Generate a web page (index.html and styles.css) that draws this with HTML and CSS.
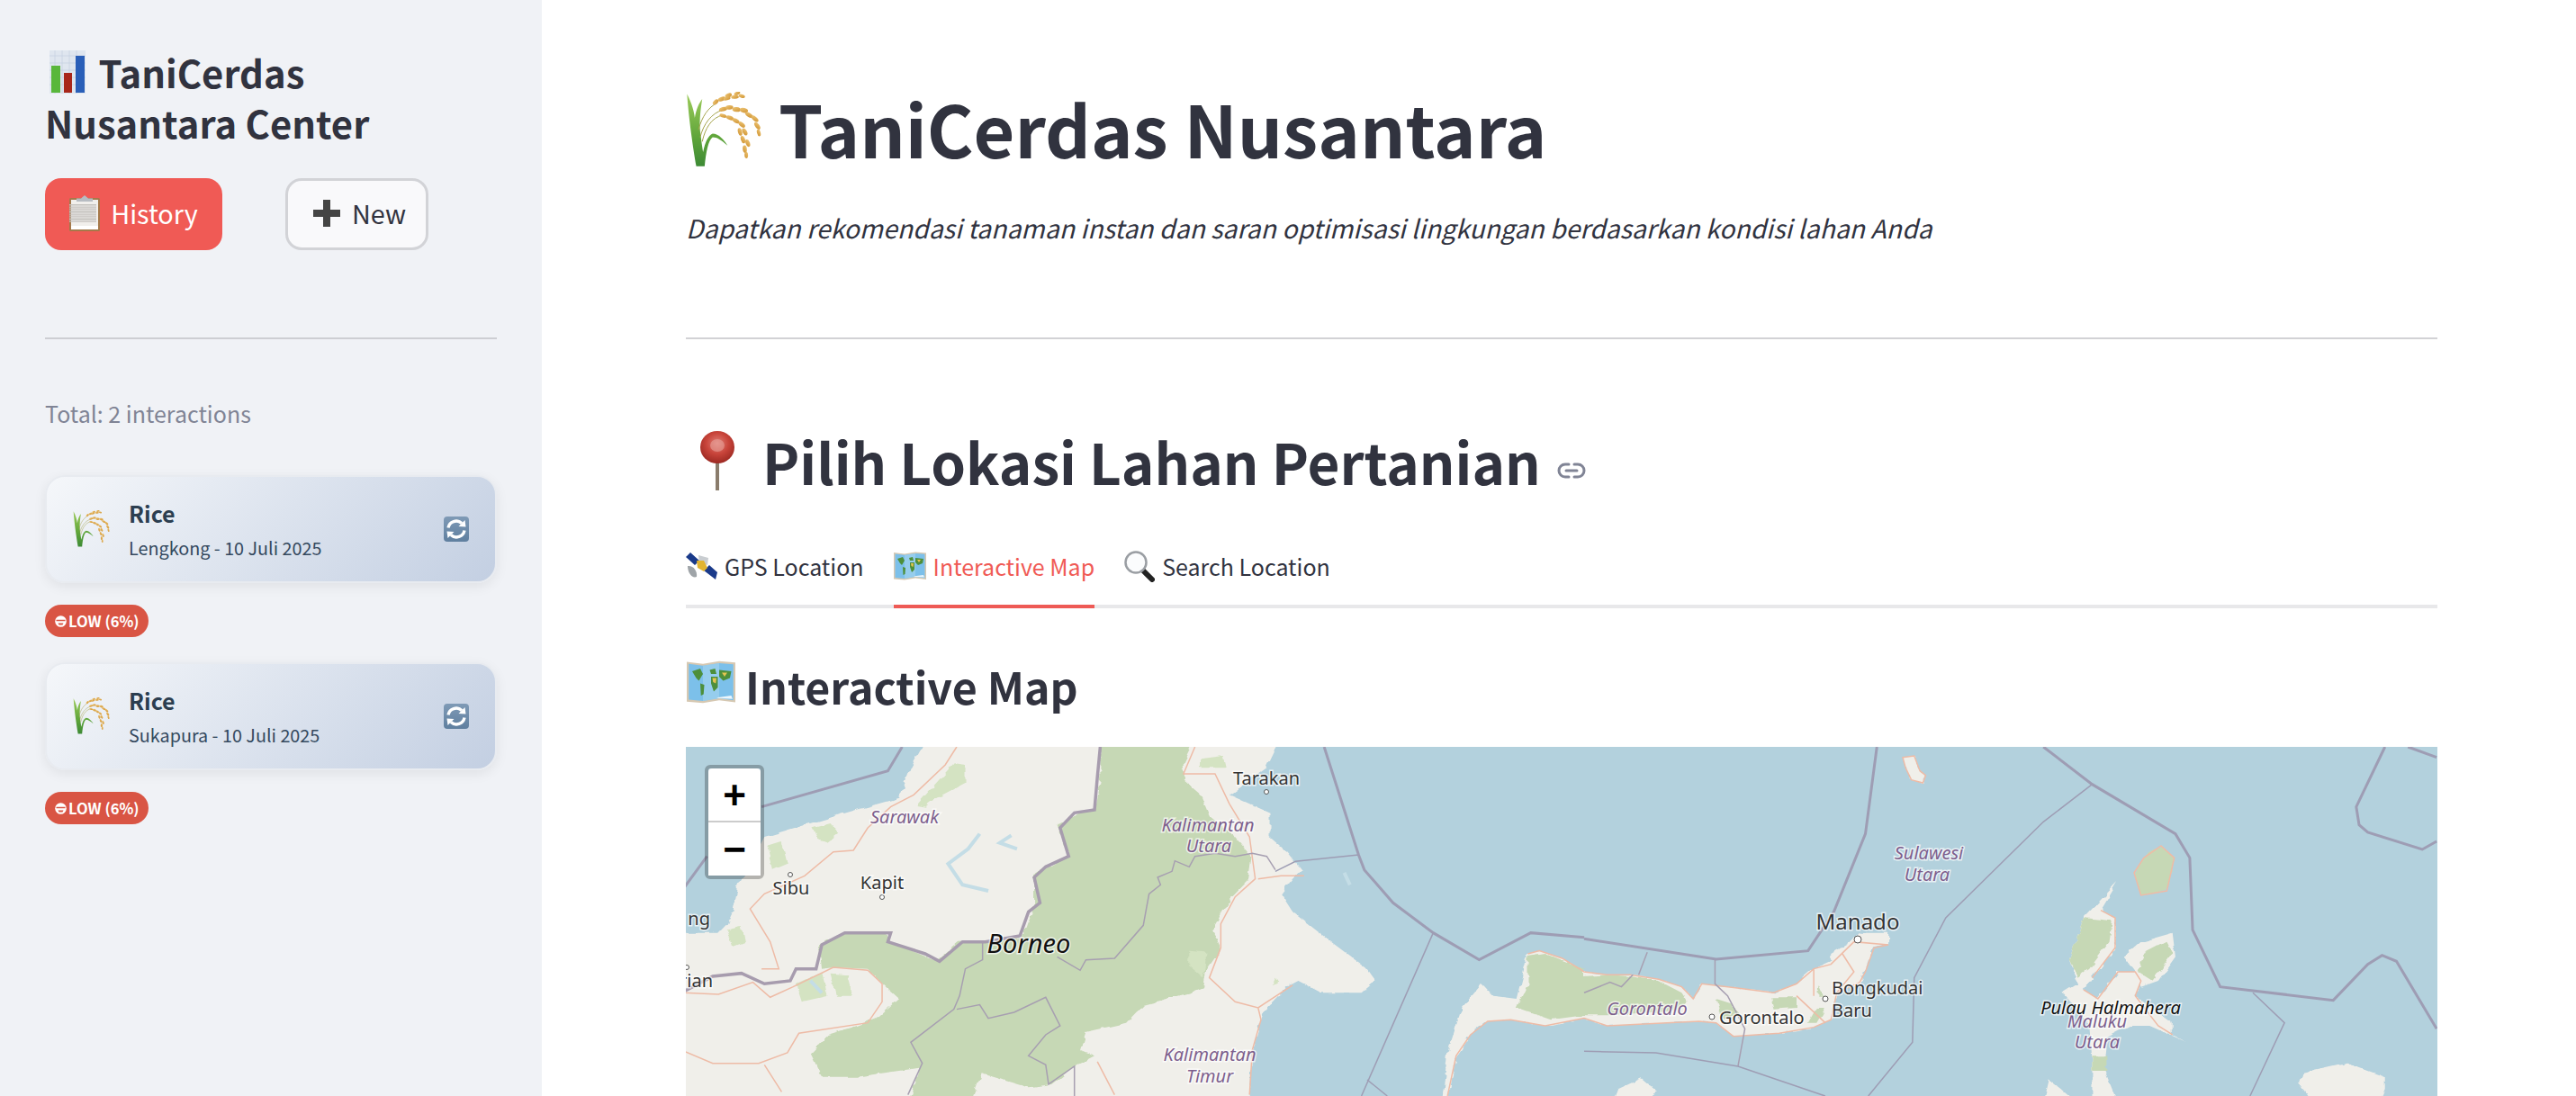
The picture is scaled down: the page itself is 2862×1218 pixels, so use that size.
FILE: index.html
```html
<!DOCTYPE html>
<html lang="id">
<head>
<meta charset="utf-8">
<title>TaniCerdas Nusantara</title>
<link rel="stylesheet" href="styles.css">
</head>
<body>
<svg class="defs" aria-hidden="true">
  <defs>
    <filter id="rough" x="-5%" y="-5%" width="110%" height="110%"><feTurbulence type="fractalNoise" baseFrequency=".035" numOctaves="3" seed="4"/><feDisplacementMap in="SourceGraphic" scale="12"/></filter>
    <linearGradient id="leaf" x1="0" y1="0" x2="0" y2="1"><stop offset="0" stop-color="#9ccb5a"/><stop offset=".6" stop-color="#5fa53a"/><stop offset="1" stop-color="#3d8a35"/></linearGradient>
    <linearGradient id="grain" x1="0" y1="0" x2="1" y2="1"><stop offset="0" stop-color="#eec77a"/><stop offset="1" stop-color="#cf922f"/></linearGradient>
    <radialGradient id="ball" cx=".5" cy=".38" r=".6"><stop offset="0" stop-color="#e08078"/><stop offset=".55" stop-color="#c8443a"/><stop offset="1" stop-color="#9f2b24"/></radialGradient>
    <linearGradient id="tile" x1="0" y1="0" x2="0" y2="1"><stop offset="0" stop-color="#7f9ab6"/><stop offset="1" stop-color="#5f7f9f"/></linearGradient>
    <symbol id="i-rice" viewBox="40 40 260 255">
      <path fill="url(#leaf)" d="M75 288C65 230 50 130 44 45C60 75 68 105 70 125C75 95 85 75 95 62C90 95 85 130 88 170C92 200 95 225 98 240C105 205 115 185 130 178C150 178 170 200 180 218C160 200 145 190 130 190C115 200 108 240 103 288Z"/>
      <path fill="none" stroke="#a3a24a" stroke-width="3" d="M82 165C95 120 115 90 145 75M88 190C100 145 125 110 165 98M95 205C105 160 125 125 165 115"/>
      <g fill="url(#grain)">
        <ellipse cx="140" cy="72" rx="11" ry="7" transform="rotate(-40 140 72)"/><ellipse cx="160" cy="62" rx="13" ry="7" transform="rotate(-20 160 62)"/><ellipse cx="183" cy="50" rx="12" ry="7" transform="rotate(-25 183 50)"/><ellipse cx="178" cy="60" rx="12" ry="6" transform="rotate(-15 178 60)"/><ellipse cx="212" cy="43" rx="11" ry="6" transform="rotate(-25 212 43)"/><ellipse cx="205" cy="55" rx="13" ry="6" transform="rotate(-5 205 55)"/><ellipse cx="228" cy="52" rx="11" ry="6" transform="rotate(15 228 52)"/>
        <ellipse cx="165" cy="96" rx="14" ry="7" transform="rotate(-15 165 96)"/><ellipse cx="186" cy="90" rx="13" ry="7" transform="rotate(-5 186 90)"/><ellipse cx="210" cy="97" rx="14" ry="8" transform="rotate(5 210 97)"/><ellipse cx="235" cy="100" rx="14" ry="8" transform="rotate(15 235 100)"/><ellipse cx="252" cy="115" rx="14" ry="7" transform="rotate(30 252 115)"/><ellipse cx="272" cy="128" rx="14" ry="7" transform="rotate(40 272 128)"/><ellipse cx="280" cy="152" rx="14" ry="7" transform="rotate(55 280 152)"/><ellipse cx="285" cy="175" rx="12" ry="6" transform="rotate(75 285 175)"/>
        <ellipse cx="165" cy="118" rx="12" ry="6" transform="rotate(15 165 118)"/><ellipse cx="188" cy="125" rx="13" ry="7" transform="rotate(20 188 125)"/><ellipse cx="208" cy="135" rx="13" ry="7" transform="rotate(30 208 135)"/><ellipse cx="228" cy="148" rx="13" ry="7" transform="rotate(40 228 148)"/><ellipse cx="222" cy="172" rx="13" ry="7" transform="rotate(75 222 172)"/><ellipse cx="238" cy="172" rx="13" ry="7" transform="rotate(60 238 172)"/><ellipse cx="232" cy="198" rx="13" ry="7" transform="rotate(70 232 198)"/><ellipse cx="248" cy="210" rx="13" ry="7" transform="rotate(70 248 210)"/><ellipse cx="238" cy="230" rx="13" ry="7" transform="rotate(85 238 230)"/><ellipse cx="243" cy="250" rx="11" ry="6" transform="rotate(88 243 250)"/>
      </g>
    </symbol>
    <symbol id="i-map" viewBox="0 0 36 32">
      <path fill="#d6c8b2" d="M0 1L12 2.500L24 .5L36 1.500V31L24 29.500L12 31.500L0 30.500Z"/>
      <path fill="#7cc0ea" d="M1.500 2.500L12 3.800L24 2L34.500 2.800V29.500L24 28L12 30L1.500 29Z"/>
      <path fill="#a8d5ee" d="M12 3.800L24 2V28L12 30Z" opacity=".6"/>
      <path fill="#4d8f3b" d="M4 8L10 6L12 10L9 15L7 13ZM10 17L13 18L12.500 25L10.500 26ZM17 7L21 6L22 10L18 10ZM18 12L23 12L23 20L20 23L18 17ZM24 7L33 8L32 13L27 15L24 12Z"/>
      <path fill="#e4c552" d="M19 13L22 13L21.500 17L19.500 16ZM26 9L30 9L28 12Z"/>
      <path fill="#fff" opacity=".85" d="M22 27.500L33 26L34 28.500L24 28Z"/>
    </symbol>
    <symbol id="i-link" viewBox="0 0 32 18">
      <path fill="none" stroke="#808495" stroke-width="3" stroke-linecap="round" d="M13 2H9A7 7 0 0 0 9 16H13M19 2H23A7 7 0 0 1 23 16H19M10 9H22"/>
    </symbol>
    <symbol id="i-refresh" viewBox="0 0 28 28">
      <rect width="28" height="28" rx="4" fill="url(#tile)"/>
      <path fill="none" stroke="#fff" stroke-width="3.400" d="M5 12.500A9 9 0 0 1 20 7.500M23 15.500A9 9 0 0 1 8 20.500"/>
      <path fill="#fff" d="M16.500 11L24.500 11.500L23.500 4ZM11.500 17L3.500 16.500L4.500 24Z"/>
    </symbol>
    <symbol id="i-face" viewBox="0 0 13 13">
      <circle cx="6.500" cy="6.500" r="6.300" fill="#fff"/>
      <path fill="#d95544" d="M1.500 4.800H11.500V6.300H1.500ZM3.500 8.500H9.500L8.500 10.500H4.500Z"/>
    </symbol>
  </defs>
</svg>

<div class="app">
  <aside class="sidebar">
    <h3 class="side-title">
      <svg class="ic-chart" viewBox="0 0 40 48" aria-hidden="true"><rect width="40" height="48" fill="#dfe6ef"/><path fill="none" stroke="#c6d2e2" stroke-width=".8" d="M0 6H40M0 14H40M0 22H40M0 30H40M0 38H40M6 0V48M14 0V48M22 0V48M30 0V48"/><rect x="2" y="17" width="10" height="30" fill="#59b73b"/><rect x="16" y="25" width="9" height="22" fill="#a8271a"/><rect x="29" y="6" width="10" height="41" fill="#2a5fb8"/></svg>
      <span>TaniCerdas</span><br>Nusantara Center
    </h3>
    <div class="side-actions">
      <button class="btn btn-primary" type="button">
        <svg class="ic-clip" viewBox="0 0 34 40" aria-hidden="true"><rect y="3" width="34" height="37" rx="1.500" fill="#a5794a"/><rect x="2" y="5" width="30" height="32" fill="#f1efec"/><path stroke="#c3c1bd" stroke-width="14" stroke-dasharray="1 .6" d="M6 10V30M9 10V30M13 10V30M18 10V30M23 10V30"/><rect x="2" y="34" width="30" height="4" fill="#fff"/><path fill="#b7bcc2" d="M8 7V3.500H13L17 0L21 3.500H26V7Z"/></svg>
        History
      </button>
      <button class="btn btn-ghost" type="button">
        <svg class="ic-plus" viewBox="0 0 30 30" aria-hidden="true"><path fill="#444" d="M11 0H19V11H30V19H19V30H11V19H0V11H11Z"/></svg>
        New
      </button>
    </div>
    <hr class="side-rule">
    <p class="total">Total: 2 interactions</p>
    <div class="card">
      <svg class="ic-card-rice" aria-hidden="true"><use href="#i-rice"/></svg>
      <div class="card-text">
        <div class="card-name">Rice</div>
        <div class="card-meta">Lengkong - 10 Juli 2025</div>
      </div>
      <svg class="ic-refresh" aria-hidden="true"><use href="#i-refresh"/></svg>
    </div>
    <span class="badge"><svg class="ic-face" aria-hidden="true"><use href="#i-face"/></svg>LOW (6%)</span>
    <div class="card">
      <svg class="ic-card-rice" aria-hidden="true"><use href="#i-rice"/></svg>
      <div class="card-text">
        <div class="card-name">Rice</div>
        <div class="card-meta">Sukapura - 10 Juli 2025</div>
      </div>
      <svg class="ic-refresh" aria-hidden="true"><use href="#i-refresh"/></svg>
    </div>
    <span class="badge"><svg class="ic-face" aria-hidden="true"><use href="#i-face"/></svg>LOW (6%)</span>
  </aside>

  <main class="main">
    <h1 class="page-title"><svg class="ic-title-rice" aria-hidden="true"><use href="#i-rice"/></svg>TaniCerdas Nusantara</h1>
    <p class="subtitle">Dapatkan rekomendasi tanaman instan dan saran optimisasi lingkungan berdasarkan kondisi lahan Anda</p>
    <hr class="main-rule">
    <h2 class="section-title">
      <svg class="ic-pin" viewBox="0 0 38 66" aria-hidden="true"><rect x="17" y="30" width="4" height="36" fill="#8a7c6c"/><ellipse cx="19" cy="18" rx="19" ry="18" fill="url(#ball)"/><ellipse cx="19" cy="16" rx="8" ry="7" fill="#e9a8a0" opacity=".55"/></svg>
      Pilih Lokasi Lahan Pertanian
      <svg class="ic-link" aria-hidden="true"><use href="#i-link"/></svg>
    </h2>
    <nav class="tabs">
      <a class="tab">
        <svg class="ic-sat" viewBox="0 0 35 30" aria-hidden="true"><path fill="#1a3a8a" d="M0 5L5 0L15 9L10 14ZM20 20L26 14L35 22L33 30Z"/><path fill="#c9cdd1" d="M14 3L25 6L24 14L15 11Z"/><path fill="#e1b431" d="M12 9L20 9L24 17L20 21L13 17Z"/><path fill="#9fa4a8" d="M2 15C8 14 13 20 12 27C7 29 2 23 2 15Z"/></svg>
        GPS Location
      </a>
      <a class="tab tab-active">
        <svg class="ic-tabmap" aria-hidden="true"><use href="#i-map"/></svg>
        Interactive Map
      </a>
      <a class="tab">
        <svg class="ic-glass" viewBox="0 0 34 35" aria-hidden="true"><path stroke="#222" stroke-width="6" stroke-linecap="round" d="M21 22L31 32"/><circle cx="13" cy="13" r="11.500" fill="#fbfcfd" stroke="#9a9ea3" stroke-width="2.500"/></svg>
        Search Location
      </a>
    </nav>
    <h3 class="sub-title"><svg class="ic-submap" aria-hidden="true"><use href="#i-map"/></svg>Interactive Map</h3>
    <section class="map">
      <svg class="map-canvas" viewBox="0 0 1946 388" aria-label="Peta">
        <g class="geo" transform="translate(-2 -10) scale(.6378 .3333)">
          <g class="rough">
            <path class="land" d="M415 30L395 100L375 200L300 240L210 290L140 330L110 440L95 490L85 580L75 620L60 650L40 650L-20 650V1220H985L990 1040L1010 910L1050 830L1070 810L1110 850L1180 850L1205 810L1190 770L1120 670L1060 580L1040 520L1060 470L1075 440L1050 380L1020 330L1020 250L950 190L1015 100L1040 0H415Z"/>
            <path class="forest" d="M725 0H890L870 80L870 140L900 190L915 260L960 330L990 400L985 470L950 540L920 640L935 700L910 770L905 830L880 850L800 890L770 950L700 980L690 1040L715 1060L680 1095L640 1155L600 1165L520 1120L500 1220H390L410 1100L300 1130L240 1130L220 1050L250 990L300 960L340 930L375 870L340 810L320 770L260 765L240 770L235 690L275 650L350 650L360 680L440 745L480 680L590 670L610 560L610 460L670 390L650 290L690 250L715 240L725 130Z"/>
            <path class="forest-light" d="M470 85L490 90L490 150L440 200L420 230L405 225L430 170ZM225 300L255 285L270 320L250 350L235 340ZM145 360L170 345L180 420L155 440ZM75 640L100 630L105 680L85 695ZM195 820L240 780L250 860L205 880ZM255 785L285 790L295 860L265 860ZM880 710L910 715L905 800L880 760ZM1030 800L1040 815L1025 825ZM900 70L940 60L945 100L900 100Z"/>
          </g>
          <path class="river" d="M515 320L495 370L460 420L485 490L530 510M570 325L550 350L580 370M1150 450L1160 490M220 810L240 850"/>
          <path class="road" d="M475 30L455 90L400 190L360 230L320 300L295 375L260 380L210 460L140 520L115 570L150 680L165 770L135 770M0 850L60 855L120 815L150 865L190 830L260 765L320 775L345 820L345 880L320 950L200 985L180 1050L130 1085L50 1085L0 1045M890 30L870 120L925 120L950 220L985 330L995 470L960 530L935 620L935 700L915 800L960 880L1000 900L1060 825M1000 900L1005 940L990 1040L985 1190M140 1090L170 1180M1000 470L1040 460L1080 460M720 1080L750 1190"/>
          <path class="state" d="M1030 440L1015 395L990 385L960 395L925 385L890 395L880 430L855 410L850 445L825 465L830 490L810 520L800 625L750 735L700 740L690 775L650 730M520 680L520 740L490 770L480 860L470 905L395 1015L415 1085L390 1190M475 905L515 890L530 935L575 915L630 865L655 960L630 990L600 1060L630 1090L635 1155L680 1095L680 1194"/>
          <path class="border-thick" d="M725 30L720 130L715 240L680 250L655 300L670 395L630 430L610 465L620 550L600 580L585 660L525 680L485 680L445 745L420 720L355 680L360 650L280 650L240 690L230 770L195 770L185 810L140 820L100 785L50 795L0 845"/>
          <path class="border-sea" d="M380 30L355 110L135 230M40 395L0 500M1115 30L1175 390L1185 440L1235 550L1305 650L1385 740L1475 650L1568 665"/>
          <path class="border-thin" d="M1175 390L1065 412L1030 445M1305 650L1180 1194M1190 1140L1225 1194"/>
        </g>
        <g class="geo" transform="translate(998 -10) scale(.6378 .3333)">
          <g class="rough">
            <path class="land" d="M-248 1220L-238 1050L-213 900L-178 820L-158 860L-118 870L-98 720L-78 710L-38 735L0 780L40 790L80 790L130 805L170 830L190 870L205 820L270 835L330 850L370 820L400 770L430 745L430 720L465 680L480 650L530 650L530 690L505 700L490 780L480 815L440 850L430 940L400 965L340 985L260 995L230 950L200 945L40 960L0 935L-68 960L-128 940L-168 945L-198 990L-223 1060L-238 1220Z"/>
            <path class="land" d="M930 480L900 575L925 600L925 700L885 800L870 840L895 870L930 780L960 780L970 810L960 860L1025 950L1025 990L1050 1015L985 960L950 960L910 1000L905 1100L930 1220H885L885 1070L880 960L835 850L860 820L845 740L870 600ZM1025 650L1030 730L1000 810L970 830L960 780L940 730L970 680ZM1250 1120L1330 1085L1395 1130L1395 1170L1385 1220H1270L1245 1150ZM50 1220L60 1170L100 1135L125 1175L115 1220ZM800 1220L810 1140L830 1170L860 1220ZM555 65L575 60L585 110L595 125L590 150L570 140L560 100Z"/>
            <path class="forest" d="M-98 730L-68 720L0 770L0 795L40 790L80 795L130 810L170 850L180 880L160 910L40 925L0 925L-58 940L-118 900L-98 820ZM230 870L255 885L270 920L240 935ZM325 865L370 865L370 900L330 905ZM410 825L418 860L408 860ZM405 900L420 900L405 950L390 950ZM870 600L920 610L915 680L880 770L860 800L845 740ZM1015 680L1025 715L990 810L965 780L975 720ZM885 1060L910 1060L910 1110L885 1110ZM1005 360L1028 400L1015 510L970 525L958 450L975 400Z"/>
          </g>
          <path class="road" d="M1005 360L1028 400L1015 510L970 525L958 450L975 400ZM555 65L575 60L585 110L595 125L590 150L570 140L560 100ZM-98 720L-78 710L-38 735L0 780L40 790L80 790L130 805L170 830L190 870L205 820L270 835L330 850L370 820L400 770L430 755L470 680L530 690L505 700L490 780L480 815L440 850L430 940L400 965L340 985L260 995L230 950L200 945L40 960L0 935L-68 960L-128 940L-168 945L-198 990L-223 1060L-238 1194M450 720L470 780L440 850M400 770L400 860M370 860L420 950M870 840L895 870L930 780L960 780L970 810L960 860L1000 960L1025 990M900 575L925 600L925 700L885 800"/>
          <path class="state" d="M110 715L95 790M0 850L45 815L65 830L85 790M228 740L228 820L250 860L280 970L268 1095"/>
          <path class="border-sea" d="M510 30L490 320L435 580L390 710L230 738L0 670M800 30L885 155L1030 320L1055 400L1060 640L1108 830L1305 875L1365 755L1390 725L1415 745L1485 970M1395 30L1345 230L1350 290L1365 315L1460 372L1485 345M1435 30L1485 65"/>
          <path class="border-thin" d="M0 1045L125 1050L268 1095L420 1194M885 155L800 280L630 600L575 800L572 1015L495 1194M1165 850L1220 950L1160 1194"/>
        </g>
        <g class="dots">
          <circle cx="116" cy="142" r="2.500"/><circle cx="218" cy="167" r="2.500"/><circle cx="645" cy="50" r="2.500"/><circle cx="1" cy="245" r="2.500"/><circle cx="1302" cy="214" r="4"/><circle cx="1266" cy="280" r="3"/><circle cx="1140" cy="300" r="3"/>
        </g>
        <g class="labels">
          <text class="lb-place lb-mid" x="645" y="42">Tarakan</text>
          <text class="lb-place lb-mid" x="117" y="164">Sibu</text>
          <text class="lb-place lb-mid" x="218" y="158">Kapit</text>
          <text class="lb-place lb-end" x="27" y="198">ng</text>
          <text class="lb-place lb-end" x="30" y="267">rian</text>
          <text class="lb-region lb-mid" x="243" y="85">Sarawak</text>
          <text class="lb-region lb-mid" x="580" y="94">Kalimantan</text>
          <text class="lb-region lb-mid" x="581" y="117">Utara</text>
          <text class="lb-region lb-mid" x="582" y="349">Kalimantan</text>
          <text class="lb-region lb-mid" x="582" y="373">Timur</text>
          <text class="lb-island lb-mid lb-big" x="381" y="229">Borneo</text>
          <text class="lb-region lb-mid" x="1381" y="125">Sulawesi</text>
          <text class="lb-region lb-mid" x="1379" y="149">Utara</text>
          <text class="lb-place lb-mid lb-city" x="1302" y="203">Manado</text>
          <text class="lb-place" x="1273" y="275">Bongkudai</text>
          <text class="lb-place" x="1273" y="300">Baru</text>
          <text class="lb-region lb-mid" x="1068" y="298">Gorontalo</text>
          <text class="lb-place" x="1148" y="308">Gorontalo</text>
          <text class="lb-region lb-mid" x="1568" y="312">Maluku</text>
          <text class="lb-region lb-mid" x="1568" y="335">Utara</text>
          <text class="lb-island lb-mid" x="1583" y="297">Pulau Halmahera</text>
        </g>
      </svg>
      <div class="zoom">
        <a class="zoom-btn zoom-in">+</a>
        <a class="zoom-btn">−</a>
      </div>
    </section>
  </main>
</div>
</body>
</html>
```

FILE: styles.css
```css
* { box-sizing: border-box; }

html, body {
  margin: 0;
  height: 100%;
  overflow: hidden;
  background: #fff;
}

body {
  font-family: "Noto Sans CJK SC", "Noto Sans", sans-serif;
  color: #31333f;
}

.defs {
  position: absolute;
  width: 0;
  height: 0;
}

.app {
  display: flex;
  height: 1218px;
}

/* Sidebar */
.sidebar {
  flex: 0 0 602px;
  padding: 52px 50px 0;
  background: #f0f2f6;
}

.side-title {
  margin: 0;
  font-size: 41.800px;
  line-height: 56px;
  font-weight: 700;
}

.ic-chart {
  width: 40px;
  height: 48px;
  margin: 0 5px 0 5px;
  vertical-align: -6px;
}

.side-actions {
  display: flex;
  gap: 70px;
  margin-top: 34px;
}

.btn {
  display: flex;
  align-items: center;
  justify-content: center;
  height: 80px;
  padding: 0 0 3px;
  border-radius: 18px;
  font-family: inherit;
  font-size: 28.800px;
  line-height: 44px;
}

.btn-primary {
  width: 197px;
  gap: 12px;
  border: 0;
  background: #f05a55;
  color: #fff;
}

.btn-ghost {
  width: 159px;
  gap: 13px;
  padding-left: 6px;
  border: 3px solid #d2d3d7;
  background: #f9f9fb;
  color: #31333f;
}

.ic-clip { width: 34px; height: 40px; }
.ic-plus { width: 30px; height: 30px; }

.side-rule {
  height: 2px;
  margin: 97px 0 0;
  border: 0;
  background: #cdced3;
}

.total {
  margin: 62px 0 49px;
  font-size: 25px;
  line-height: 40px;
  color: #808495;
}

.card {
  display: flex;
  align-items: center;
  height: 120px;
  padding: 0 29px;
  border: 2px solid #e8ebf0;
  border-radius: 22px;
  background: linear-gradient(135deg, #f5f7fa 0%, #c3cfe2 100%);
  box-shadow: 0 4px 14px rgba(0, 0, 0, .07);
}

.ic-card-rice { flex: none; width: 42px; height: 42px; }

.card-text {
  flex: 1;
  margin-left: 20px;
}

.card-name {
  font-size: 25px;
  line-height: 36px;
  font-weight: 700;
  color: #2c3e50;
}

.card-meta {
  margin-top: 5px;
  font-size: 19.800px;
  line-height: 32px;
  color: #34495e;
}

.ic-refresh { flex: none; width: 28px; height: 28px; }

.badge {
  display: flex;
  align-items: center;
  gap: 2px;
  width: 115px;
  height: 36px;
  margin: 24px 0 28px;
  padding-left: 11px;
  border-radius: 18px;
  background: #d95544;
  color: #fff;
  font-size: 16.500px;
  font-weight: 700;
  line-height: 24px;
}

.ic-face { flex: none; width: 13px; height: 13px; }

/* Main column */
.main {
  flex: 1;
  min-width: 0;
  padding: 89px 154px 0 160px;
}

.page-title {
  display: flex;
  gap: 17px;
  margin: 0;
  font-size: 79px;
  line-height: 106px;
  font-weight: 700;
}

.ic-title-rice {
  flex: none;
  width: 86px;
  height: 86px;
  margin-top: 13px;
}

.subtitle {
  margin: 36px 0 0;
  font-size: 28.400px;
  line-height: 44px;
  font-style: italic;
}

.main-rule {
  height: 2px;
  margin: 100px 0 0;
  border: 0;
  background: #d2d2d5;
}

.section-title {
  display: flex;
  align-items: center;
  margin: 93px 0 0;
  font-size: 62px;
  line-height: 84px;
  font-weight: 700;
}

.ic-pin {
  flex: none;
  width: 38px;
  height: 66px;
  margin: 0 31px 0 16px;
}

.ic-link {
  flex: none;
  width: 32px;
  height: 18px;
  margin: 22px 0 0 18px;
}

.tabs {
  display: flex;
  gap: 33px;
  margin-top: 46px;
  border-bottom: 4px solid #e8e8ea;
}

.tab {
  display: flex;
  align-items: center;
  gap: 8px;
  padding: 9px 0 23px;
  font-size: 25px;
  line-height: 40px;
  color: #31333f;
}

.tab-active {
  margin-bottom: -4px;
  border-bottom: 4px solid #ee5a55;
  color: #f05a55;
}

.ic-sat { width: 35px; height: 30px; }
.ic-tabmap { width: 36px; height: 32px; }
.ic-glass { width: 34px; height: 35px; }

.sub-title {
  display: flex;
  align-items: center;
  gap: 10px;
  margin: 52px 0 0;
  font-size: 48.300px;
  line-height: 68px;
  font-weight: 700;
}

.ic-submap { flex: none; width: 56px; height: 48px; margin-top: -8px; }

/* Map */
.map {
  position: relative;
  height: 388px;
  margin-top: 34px;
  background: #b3d1dd;
  overflow: hidden;
}

.map-canvas {
  display: block;
  width: 100%;
  height: 100%;
}

.rough { filter: url(#rough); }
.geo { filter: blur(.7px); }
.geo * { vector-effect: non-scaling-stroke; fill: none; }
.geo .land { fill: #f0efea; }
.geo .forest { fill: #c6d8b5; }
.geo .forest-light { fill: #d4e3c2; }
.river { stroke: #c4dde6; stroke-width: 4; }
.road { stroke: #eebba6; stroke-width: 1.500; }
.state { stroke: #a79fb1; stroke-width: 1.500; }
.border-thick { stroke: #a79cae; stroke-width: 3.500; }
.border-sea { stroke: #9e9db4; stroke-width: 3; }
.border-thin { stroke: #9e9db4; stroke-width: 1.500; }

.dots circle {
  fill: #fff;
  stroke: #555;
  stroke-width: 1;
}

.labels text {
  font-family: "Noto Sans", sans-serif;
  font-size: 20px;
  paint-order: stroke;
  stroke: rgba(255, 255, 255, .7);
  stroke-width: 3px;
}

.labels .lb-mid { text-anchor: middle; }
.labels .lb-end { text-anchor: end; }
.labels .lb-place { fill: #333; }
.labels .lb-city { font-size: 24px; }
.labels .lb-region { fill: #7d5f8d; font-style: italic; }
.labels .lb-island { fill: #111; font-style: italic; }
.labels .lb-big { font-size: 29px; }

.zoom {
  position: absolute;
  top: 20px;
  left: 21px;
  width: 66px;
  border: 4px solid rgba(0, 0, 0, .25);
  border-radius: 6px;
  background-clip: padding-box;
}

.zoom-btn {
  display: block;
  height: 59px;
  background: #fff;
  color: #000;
  font-family: "Liberation Sans", sans-serif;
  font-size: 44px;
  font-weight: 700;
  line-height: 59px;
  text-align: center;
}

.zoom-in {
  height: 60px;
  border-bottom: 2px solid #ccc;
  border-radius: 4px 4px 0 0;
}
```
